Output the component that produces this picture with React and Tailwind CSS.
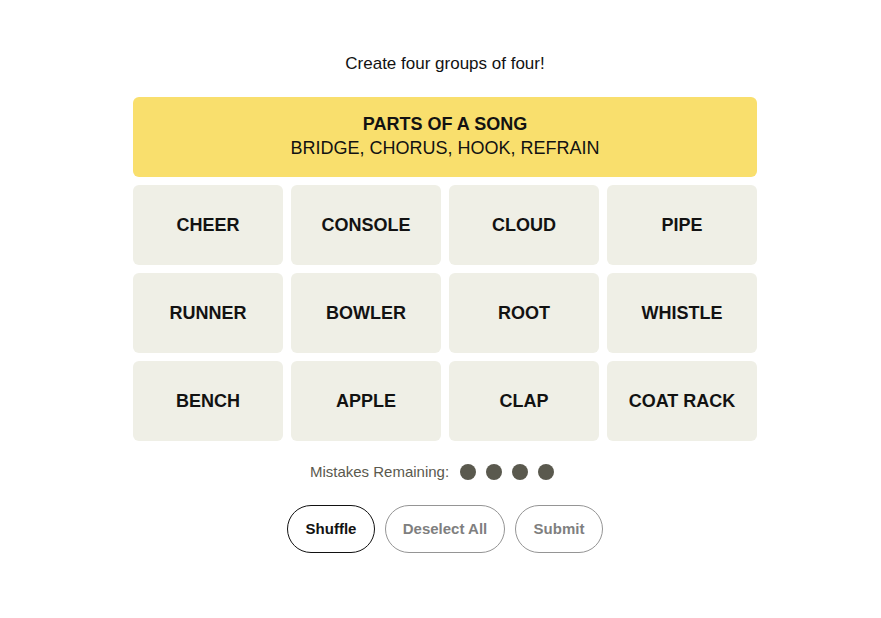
const words = [
  "CHEER", "CONSOLE", "CLOUD", "PIPE",
  "RUNNER", "BOWLER", "ROOT", "WHISTLE",
  "BENCH", "APPLE", "CLAP", "COAT RACK",
];

export default function App() {
  return (
    <div className="min-h-screen bg-white font-['Liberation_Sans',Arial,sans-serif] text-[#121212]">
      <div className="flex flex-col items-center pt-[53px] pl-[9px]">
        <p className="text-[17px] leading-[22px]">Create four groups of four!</p>

        <div className="mt-[22px] grid w-[624px] grid-cols-4 gap-2">
          <div className="col-span-4 flex h-[80px] flex-col items-center justify-center rounded-md bg-[#f9df6d]">
            <p className="text-[18px] font-bold leading-[24px] -mt-[2px]">PARTS OF A SONG</p>
            <p className="text-[18px] leading-[24px]">BRIDGE, CHORUS, HOOK, REFRAIN</p>
          </div>
          {words.map((w) => (
            <div
              key={w}
              className="flex h-[80px] items-center justify-center rounded-md bg-[#efefe6] text-[18px] font-bold"
            >
              {w}
            </div>
          ))}
        </div>

        <div className="mt-[21px] flex h-[20px] items-center pr-[26px] text-[15px] leading-[20px] text-[#5a594e]">
          <span>Mistakes Remaining:</span>
          <div className="ml-[11px] flex gap-[10px]">
            <span className="h-4 w-4 rounded-full bg-[#5a594e]" />
            <span className="h-4 w-4 rounded-full bg-[#5a594e]" />
            <span className="h-4 w-4 rounded-full bg-[#5a594e]" />
            <span className="h-4 w-4 rounded-full bg-[#5a594e]" />
          </div>
        </div>

        <div className="mt-[23px] flex gap-[10px] text-[15px] font-bold">
          <button className="h-[48px] w-[88px] rounded-full border border-[#121212] text-[#121212]">
            Shuffle
          </button>
          <button className="h-[48px] w-[120px] rounded-full border border-[#959595] text-[#7f7f7f]">
            Deselect All
          </button>
          <button className="h-[48px] w-[88px] rounded-full border border-[#959595] text-[#7f7f7f]">
            Submit
          </button>
        </div>
      </div>
    </div>
  );
}
